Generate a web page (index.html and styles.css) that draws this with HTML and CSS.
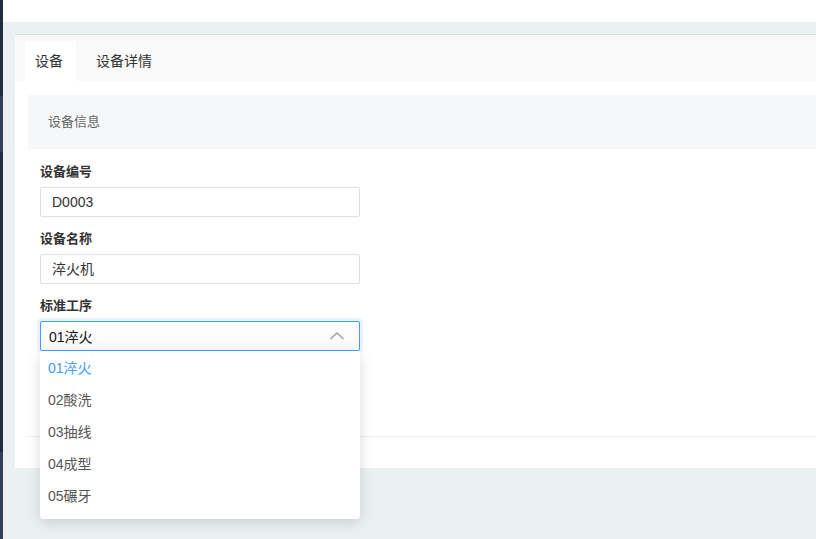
FILE: index.html
```html
<!DOCTYPE html>
<html lang="zh">
<head>
<meta charset="utf-8">
<title>设备</title>
<link rel="stylesheet" href="styles.css">
</head>
<body>
<div class="app">
  <aside class="rail">
    <div class="rail-seg dark h96"></div>
    <div class="rail-seg light h56"></div>
    <div class="rail-seg dark h300"></div>
    <div class="rail-seg light grow"></div>
  </aside>
  <div class="main">
    <header class="topbar"></header>
    <div class="content">
      <div class="card">
        <nav class="tabs">
          <div class="tab active">设备</div>
          <div class="tab">设备详情</div>
        </nav>
        <div class="body">
          <div class="panel-head">设备信息</div>
          <form class="form">
            <div class="field">
              <label class="label">设备编号</label>
              <div class="input">D0003</div>
            </div>
            <div class="field">
              <label class="label">设备名称</label>
              <div class="input">淬火机</div>
            </div>
            <div class="field">
              <label class="label">标准工序</label>
              <div class="select-wrap">
                <div class="select">
                  <span class="select-value">01淬火</span>
                  <svg class="chevron" width="16" height="10" viewBox="0 0 16 10"><path d="M1.5 8 L8 2 L14.5 8" fill="none" stroke="#a0a0a0" stroke-width="1.6"/></svg>
                </div>
                <ul class="dropdown">
                  <li class="option selected">01淬火</li>
                  <li class="option">02酸洗</li>
                  <li class="option">03抽线</li>
                  <li class="option">04成型</li>
                  <li class="option">05碾牙</li>
                </ul>
              </div>
            </div>
          </form>
          <div class="footer"></div>
        </div>
      </div>
    </div>
  </div>
</div>
</body>
</html>
```

FILE: styles.css
```css
* { box-sizing: border-box; }
html, body { margin: 0; padding: 0; }
body {
  font-family: "Liberation Sans", "Noto Sans CJK SC", sans-serif;
  color: #333;
  background: #ebf0f0;
  width: 816px;
  height: 539px;
  overflow: hidden;
}
.app { display: flex; height: 539px; }
.rail { width: 3px; display: flex; flex-direction: column; flex-shrink: 0; }
.rail-seg.dark { background: #1f2d3d; }
.rail-seg.light { background: #2f4058; }
.h96 { height: 96px; }
.h56 { height: 56px; }
.h300 { height: 300px; }
.grow { flex: 1; }
.main { flex: 1; display: flex; flex-direction: column; min-width: 0; }
.topbar { height: 22px; background: #fff; flex-shrink: 0; }
.content { flex: 1; padding: 12px 0 0 12px; background: #ebf0f0; }
.card {
  height: 434px;
  background: #fff;
  border-top: 1px solid #d9dcdc;
  display: flex;
  flex-direction: column;
}
.tabs {
  height: 46px;
  background: #f9f9f9;
  display: flex;
  align-items: flex-end;
  padding-left: 10px;
  flex-shrink: 0;
}
.tab {
  height: 40px;
  line-height: 40px;
  font-size: 14px;
  color: #333;
  padding: 0 10px;
}
.tab.active { background: #fff; width: 51px; margin-right: 10px; }
.body {
  flex: 1;
  display: flex;
  flex-direction: column;
  padding: 14px 0 0 13px;
}
.panel-head {
  height: 54px;
  line-height: 54px;
  background: #f6f7f9;
  padding-left: 20px;
  font-size: 13px;
  color: #666;
}
.form {
  flex: 1;
  padding: 14px 0 0 12px;
  margin: 0;
}
.field { margin-bottom: 13px; }
.label {
  display: block;
  height: 18px;
  line-height: 18px;
  font-size: 13px;
  font-weight: bold;
  color: #333;
  margin-bottom: 6px;
}
.input {
  width: 320px;
  height: 30px;
  line-height: 28px;
  border: 1px solid #dcdfe6;
  border-radius: 2px;
  padding-left: 11px;
  font-size: 14px;
  color: #333;
}
.select-wrap { position: relative; width: 320px; }
.select {
  height: 30px;
  border: 1px solid #409eff;
  border-radius: 2px;
  box-shadow: 0 0 0 3px #eaf3fd;
  background: linear-gradient(#fff, #f9f9fa);
  display: flex;
  align-items: center;
  justify-content: space-between;
  padding: 0 14px 0 8px;
  font-size: 14px;
  color: #111;
}
.chevron { display: block; }
.dropdown {
  position: absolute;
  top: 30px;
  left: 0;
  width: 320px;
  margin: 0;
  padding: 1px 0 7px;
  list-style: none;
  background: #fff;
  border-radius: 0 0 4px 4px;
  box-shadow: 0 4px 14px rgba(0, 0, 0, 0.14);
  z-index: 10;
}
.option {
  height: 32px;
  line-height: 32px;
  padding-left: 8px;
  font-size: 14px;
  color: #555;
}
.option.selected { color: #409eff; }
.footer {
  height: 32px;
  border-top: 1px solid #eeeeee;
  flex-shrink: 0;
}
```
